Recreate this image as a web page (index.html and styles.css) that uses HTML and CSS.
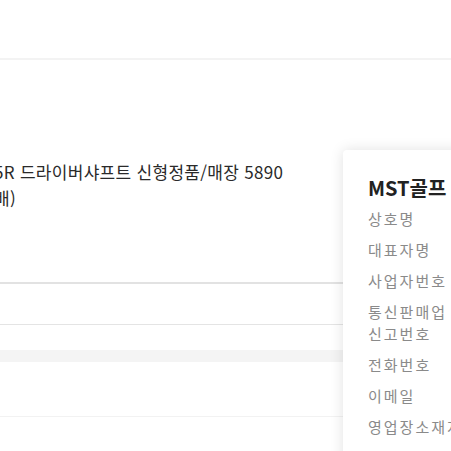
FILE: index.html
```html
<!DOCTYPE html>
<html lang="ko">
<head>
    <meta charset="UTF-8">
    <meta name="viewport" content="width=device-width, initial-scale=1.0">
    <title>상품 상세</title>
    <link rel="stylesheet" href="styles.css">
</head>
<body>
    <div class="page">
        <div class="header"></div>
        <div class="product-info">
            <p class="product-title">5R 드라이버샤프트 신형정품/매장 5890<br>배)</p>
        </div>
        <div class="option-row"></div>
        <div class="section-divider"></div>
        <div class="detail-row"></div>
    </div>

    <div class="seller-card">
        <h2 class="seller-name">MST골프</h2>
        <ul class="seller-list">
            <li>상호명</li>
            <li>대표자명</li>
            <li>사업자번호</li>
            <li>통신판매업<br>신고번호</li>
            <li>전화번호</li>
            <li>이메일</li>
            <li>영업장소재지</li>
        </ul>
    </div>
</body>
</html>
```

FILE: styles.css
```css
body {
    margin: 0;
    font-family: "Noto Sans CJK KR", "Noto Sans", sans-serif;
    background: #fff;
    color: #333;
    overflow: hidden;
}

.page {
    width: 100%;
}

.header {
    height: 58px;
    border-bottom: 2px solid #f3f3f3;
}

.product-info {
    height: 222px;
    border-bottom: 2px solid #e2e2e2;
}

.product-title {
    margin: 0 0 0 -6px;
    padding-top: 99px;
    font-size: 17px;
    line-height: 26px;
    letter-spacing: 0.3px;
    color: #2a2a2a;
    white-space: nowrap;
}

.option-row {
    height: 40px;
    border-bottom: 1px solid #e4e4e4;
}

.section-divider {
    margin-top: 25px;
    height: 12px;
    background: #f4f4f4;
}

.detail-row {
    height: 54px;
    border-bottom: 1px solid #f2f2f2;
}

.seller-card {
    position: absolute;
    left: 343px;
    top: 150px;
    width: 200px;
    height: 400px;
    padding: 24px 0 0 25px;
    background: #fff;
    border-radius: 4px;
    box-shadow: 0 0 14px rgba(0, 0, 0, 0.12);
}

.seller-name {
    margin: 0 0 6px;
    font-size: 20px;
    font-weight: 700;
    color: #222;
    line-height: 28px;
}

.seller-list {
    list-style: none;
    margin: 0;
    padding: 0;
}

.seller-list li {
    font-size: 15px;
    line-height: 22px;
    letter-spacing: 2px;
    color: #8a8a8a;
    margin-bottom: 9px;
    white-space: nowrap;
}
```
